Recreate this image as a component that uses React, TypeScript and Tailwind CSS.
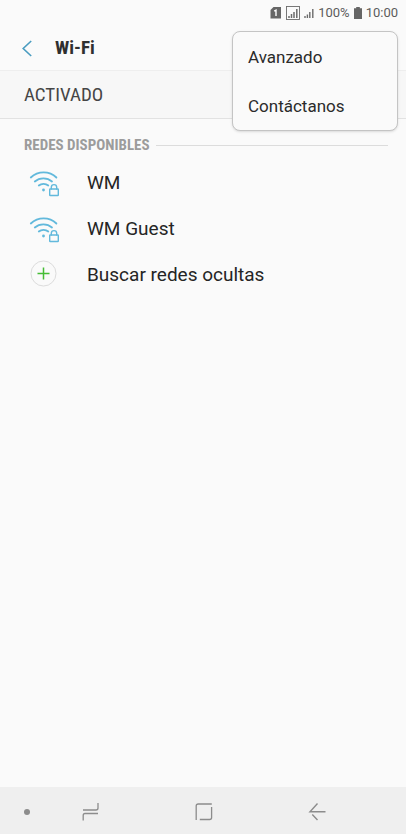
import React from "react";

const condensed = "font-['Roboto_Condensed',Roboto,sans-serif]";

function SignalBars({ boxed }: { boxed?: boolean }) {
  return boxed ? (
    <svg width="14" height="14" viewBox="0 0 14 14" fill="none" stroke="#6b6b6b" aria-hidden="true">
      <rect x="0.5" y="0.5" width="13" height="13" strokeWidth="0.9" />
      <path d="M3 12v-2M5.5 12V8M8 12V6M10.8 12V3" strokeWidth="1.5" />
    </svg>
  ) : (
    <svg width="10" height="14" viewBox="0 0 10 14" fill="none" stroke="#6b6b6b" aria-hidden="true">
      <path d="M1 12v-2M3.4 12V8.5M5.8 12V6M8.8 12V3" strokeWidth="1.4" />
    </svg>
  );
}

function StatusBar() {
  return (
    <div className="flex h-[25px] items-center justify-end pr-2 text-[13px] text-[#5c5c5c]">
      <svg className="mr-1" width="12" height="14" viewBox="0 0 12 14" aria-hidden="true">
        <path d="M3.5 1H11V12.5H0.5V4Z" fill="#666" />
        <path d="M4.2 5.2L6 4.2V10" fill="none" stroke="#fff" strokeWidth="1.4" />
      </svg>
      <SignalBars boxed />
      <span className="w-1" />
      <SignalBars />
      <span className="ml-1">100%</span>
      <svg className="mx-1" width="8" height="14" viewBox="0 0 8 14" fill="#666" aria-hidden="true">
        <path d="M2.2 1h3.6v1.3H8V13H0V2.3h2.2z" />
      </svg>
      <span>10:00</span>
    </div>
  );
}

function SecuredWifi() {
  return (
    <svg width="32" height="30" viewBox="0 0 32 30" fill="none" stroke="#62b9dc" strokeWidth="1.8" strokeLinecap="round" aria-hidden="true">
      <path d="M2.8 9.5C10 2.6 21.4 2.6 28.4 9.5" />
      <path d="M6.8 13.5C11.6 9.2 19.2 9.2 24 13.5" />
      <path d="M10.8 17.5C13.5 15.2 17.6 15.2 20.3 17.5" />
      <circle cx="15.5" cy="22" r="1.4" fill="#62b9dc" stroke="none" />
      <rect x="21.7" y="21" width="8.6" height="6.5" rx="0.5" strokeWidth="1.4" />
      <path d="M23.3 21v-1.7a2.7 2.7 0 0 1 5.4 0V21" strokeWidth="1.4" />
    </svg>
  );
}

function AddIcon() {
  return (
    <svg width="32" height="30" viewBox="0 0 32 30" fill="none" aria-hidden="true">
      <circle cx="15.5" cy="13.5" r="12.5" stroke="#dcdcdc" />
      <path d="M9.5 13.5h12M15.5 7.5v12" stroke="#45bd35" strokeWidth="1.5" />
    </svg>
  );
}

function Row({ icon, label }: { icon: React.ReactNode; label: string }) {
  return (
    <li>
      <button type="button" className="flex h-[46px] w-full items-center gap-[27px] pl-7 text-left text-[19px] text-[#252525]">
        {icon}
        <span>{label}</span>
      </button>
    </li>
  );
}

function NavBar() {
  const cell = "flex flex-1 items-center justify-center";
  return (
    <nav className="flex h-[47px] bg-[#efefef] pr-8">
      <button type="button" aria-label="Ocultar barra" className="flex w-[34px] items-center pt-0.5 pl-6">
        <span className="size-1.5 rounded-full bg-[#8c8c8c]" />
      </button>
      <button type="button" aria-label="Recientes" className={cell}>
        <svg width="18" height="20" viewBox="0 0 18 20" fill="none" stroke="#8c8c8c" strokeWidth="1.3">
          <path d="M1 9H14Q16 9 16 7V2M16 12.5H3Q1.2 12.5 1.2 14.5V19.5" />
        </svg>
      </button>
      <button type="button" aria-label="Inicio" className={cell}>
        <svg width="18" height="20" viewBox="0 0 18 20" fill="none" stroke="#8c8c8c" strokeWidth="1.3">
          <path d="M1.2 19V5Q1.2 3 3.2 3H16.8M16.6 6V16.5Q16.6 18.5 14.6 18.5H4.8" />
        </svg>
      </button>
      <button type="button" aria-label="Atrás" className={cell}>
        <svg width="18" height="20" viewBox="0 0 18 20" fill="none" stroke="#8c8c8c" strokeWidth="1.4">
          <path d="M9.5 2.5L2 10.7H17.5M4.3 13.5L9.5 19" />
        </svg>
      </button>
    </nav>
  );
}

export default function App() {
  return (
    <div className="relative flex min-h-screen flex-col bg-[#fafafa] font-[Roboto,sans-serif]">
      <StatusBar />
      <header className="flex h-[45px] items-center gap-[19px] pt-0.5 pl-5">
        <button type="button" aria-label="Volver">
          <svg width="16" height="18" viewBox="0 0 16 18" fill="none" stroke="#4a9cc0" strokeWidth="1.6">
            <path d="M11.2 1L3.2 8.5L11.2 16" />
          </svg>
        </button>
        <h1 className={`text-[19px] font-bold text-[#2f2f2f] ${condensed}`}>Wi-Fi</h1>
      </header>
      <section className="flex h-[49px] items-center border-t border-b border-t-[#eeeeee] border-b-[#e2e2e2] bg-[#f7f7f7] pt-0.5 pl-6">
        <span className={`text-[19px] text-[#454545] ${condensed}`}>ACTIVADO</span>
      </section>
      <main className="flex-1">
        <div className="flex h-[41px] items-center gap-1.5 pt-3 pr-[18px] pl-6">
          <h2 className={`text-[15px] font-bold text-[#9c9c9c] ${condensed}`}>REDES DISPONIBLES</h2>
          <span className="h-px flex-1 bg-[#dcdcdc]" />
        </div>
        <ul>
          <Row icon={<SecuredWifi />} label="WM" />
          <Row icon={<SecuredWifi />} label="WM Guest" />
          <Row icon={<AddIcon />} label="Buscar redes ocultas" />
        </ul>
      </main>
      <NavBar />
      <div role="menu" className="absolute top-[31px] right-2 flex h-[100px] w-[166px] flex-col rounded-lg border border-[#c4c4c4] bg-[#fafafa] text-[17px] text-[#2b2b2b] shadow-sm">
        <button type="button" role="menuitem" className="flex-1 pt-0.5 pl-[15px] text-left">Avanzado</button>
        <button type="button" role="menuitem" className="flex-1 pt-0.5 pl-[15px] text-left">Contáctanos</button>
      </div>
    </div>
  );
}
